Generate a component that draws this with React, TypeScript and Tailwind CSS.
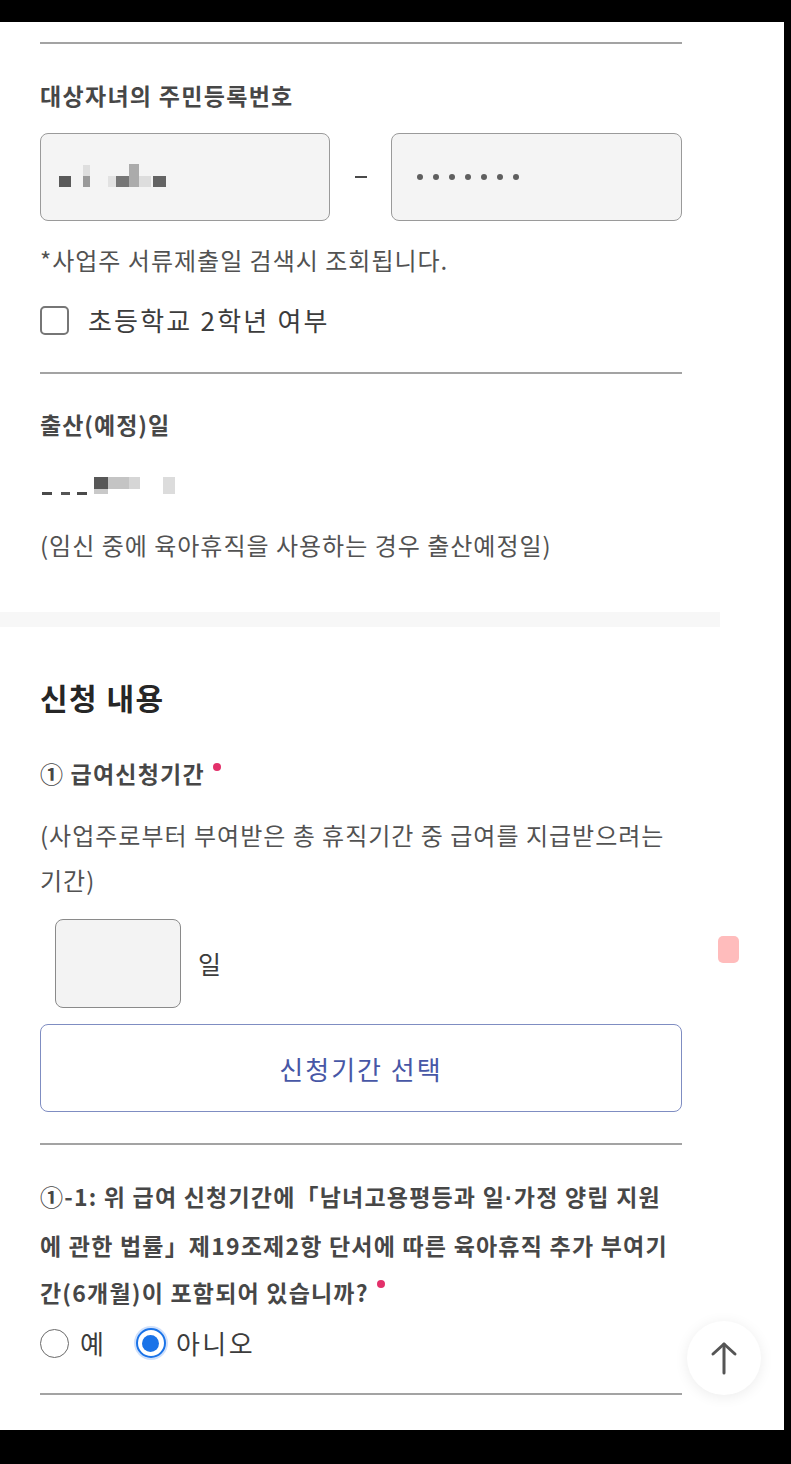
import React from 'react';

const KR = { fontFamily: '"Noto Sans CJK KR", "Noto Sans", sans-serif' };

// 흐릿하게 가려진 값 (모자이크 블록)
const Blur = ({ blocks }: { blocks: [number, number, number, number, string][] }) => (
  <div className="relative h-[30px] w-[140px]">
    {blocks.map(([x, y, w, h, c], i) => (
      <span
        key={i}
        className="absolute block"
        style={{ left: x, top: y, width: w, height: h, background: c }}
      />
    ))}
  </div>
);

const Divider = ({ className = '' }: { className?: string }) => (
  <div className={`h-[2px] w-[642px] bg-[#a3a3a3] ${className}`} />
);

const Required = ({ className = '' }: { className?: string }) => (
  <span className={`inline-block w-[8px] h-[8px] rounded-full bg-[#e3306a] ${className}`} />
);

const Dot = () => <span className="font-['Liberation_Sans',sans-serif]">·</span>;

export default function App() {
  return (
    <div className="w-[791px] h-[1464px] bg-black pt-[22px]" style={KR}>
      <div className="relative w-[784px] h-[1408px] bg-white overflow-hidden">
        {/* 자녀 정보 */}
        <div className="pl-[40px] pt-[20px]">
          <Divider />

          <div className="mt-[36px] h-[30px] leading-[30px] text-[23px] font-bold text-[#474747] tracking-[1.3px]">
            대상자녀의 주민등록번호
          </div>

          <div className="mt-[23px] flex items-center w-[642px]">
            <div className="w-[290px] h-[88px] rounded-[8px] border border-[#9a9a9a] bg-[#f4f4f4] flex items-center pl-[18px]">
              <Blur
                blocks={[
                  [0, 14, 12, 11, '#5a5a5a'],
                  [24, 3, 7, 11, '#dedede'],
                  [24, 14, 7, 11, '#9a9a9a'],
                  [49, 14, 8, 11, '#e2e2e2'],
                  [57, 14, 13, 11, '#767676'],
                  [70, 2, 10, 23, '#ababab'],
                  [80, 14, 12, 11, '#dddddd'],
                  [94, 14, 13, 11, '#646464'],
                ]}
              />
            </div>
            <div className="w-[61px] flex justify-center">
              <span className="block w-[12px] h-[2px] bg-[#4a4a4a]" />
            </div>
            <div className="w-[291px] h-[88px] rounded-[8px] border border-[#9a9a9a] bg-[#f4f4f4] flex items-center pl-[25px] gap-[10px]">
              {[0, 1, 2, 3, 4, 5, 6].map((i) => (
                <span key={i} className="block w-[6px] h-[6px] rounded-full bg-[#5f5f5f]" />
              ))}
            </div>
          </div>

          <div className="mt-[24px] h-[30px] leading-[30px] text-[24px] text-[#525252] tracking-[1px]">
            *사업주 서류제출일 검색시 조회됩니다.
          </div>

          <label className="mt-[30px] h-[30px] flex items-center gap-[19px]">
            <span className="block w-[29px] h-[29px] rounded-[5px] border-2 border-[#767676] bg-white" />
            <span className="text-[26px] leading-[30px] text-[#3c3c3c] tracking-[2.2px]">초등학교 2학년 여부</span>
          </label>

          <Divider className="mt-[37px]" />

          <div className="mt-[35px] h-[30px] leading-[30px] text-[23px] font-bold text-[#474747] tracking-[1px]">
            출산(예정)일
          </div>

          <div className="mt-[33px] h-[30px]">
            <Blur
              blocks={[
                [2, 20, 10, 3, '#4a4a4a'],
                [21, 20, 9, 3, '#555'],
                [37, 20, 10, 3, '#4a4a4a'],
                [54, 5, 14, 12, '#575757'],
                [54, 17, 14, 5, '#c9c9c9'],
                [68, 5, 21, 12, '#c4c4c4'],
                [89, 5, 11, 12, '#d6d6d6'],
                [123, 5, 12, 17, '#dcdcdc'],
              ]}
            />
          </div>

          <div className="mt-[28px] h-[30px] leading-[30px] text-[24px] text-[#525252] tracking-[1px] whitespace-nowrap">
            (임신 중에 육아휴직을 사용하는 경우 출산예정일)
          </div>
        </div>

        <div className="mt-[52px] h-[15px] w-[720px] bg-[#f7f7f7]" />

        {/* 신청 내용 */}
        <div className="pl-[40px]">
          <h2 className="mt-[50px] h-[40px] leading-[40px] text-[30px] font-bold text-[#262626] tracking-[1.5px]">신청 내용</h2>

          <div className="mt-[41px] h-[30px] leading-[30px] text-[23px] font-bold text-[#474747] tracking-[1.2px] flex items-start">
            <span>① 급여신청기간</span>
            <Required className="ml-[8px] mt-[5px]" />
          </div>

          <p className="mt-[24px] w-[700px] whitespace-nowrap text-[24px] leading-[45px] text-[#525252] tracking-[1px]">
            (사업주로부터 부여받은 총 휴직기간 중 급여를 지급받으려는
            <br />
            기간)
          </p>

          <div className="mt-[17px] ml-[15px] flex items-center gap-[17px]">
            <div className="w-[126px] h-[89px] rounded-[8px] border border-[#8a8a8a] bg-[#f3f3f3]" />
            <span className="text-[25px] text-[#3c3c3c]">일</span>
          </div>

          <button className="mt-[16px] w-[642px] h-[88px] rounded-[8px] border-[1.5px] border-[#7f8dc2] bg-white text-[26px] text-[#4757a6] tracking-[2px]">
            신청기간 선택
          </button>

          <Divider className="mt-[31px]" />

          <p className="mt-[28px] w-[720px] whitespace-nowrap text-[23px] leading-[47px] font-bold text-[#474747] tracking-[1.2px]">
            ①-1: 위 급여 신청기간에「남녀고용평등과 일<Dot />가정 양립 지원
            <br />
            에 관한 법률」제19조제2항 단서에 따른 육아휴직 추가 부여기
            <br />
            간(6개월)이 포함되어 있습니까?
            <Required className="ml-[8px] -translate-y-[14px]" />
          </p>

          <div className="mt-[12px] h-[30px] flex items-center text-[26px] text-[#3c3c3c]">
            <span className="block w-[29px] h-[29px] rounded-full border-[1.5px] border-[#6a6a6a] bg-white" />
            <span className="ml-[11px] leading-[30px]">예</span>
            <span className="ml-[32px] flex items-center justify-center w-[30px] h-[30px] rounded-full border-2 border-[#1a73e8] bg-white shadow-[0_0_0_2px_#cfe0fb]">
              <span className="block w-[17px] h-[17px] rounded-full bg-[#1a73e8]" />
            </span>
            <span className="ml-[10px] leading-[30px] tracking-[2.5px]">아니오</span>
          </div>

          <Divider className="mt-[35px]" />
        </div>

        {/* 스크롤 표시 */}
        <div className="absolute left-[718px] top-[914px] w-[21px] h-[27px] rounded-[5px] bg-[#ffbcbc]" />

        {/* 맨 위로 버튼 */}
        <button className="absolute left-[687px] top-[1299px] w-[74px] h-[74px] rounded-full bg-white shadow-[0_2px_14px_rgba(0,0,0,0.08)] flex items-center justify-center">
          <svg width="30" height="34" viewBox="0 0 30 34" fill="none" stroke="#555" strokeWidth="3" strokeLinecap="round" strokeLinejoin="round">
            <path d="M15 32V3" />
            <path d="M4 13L15 3L26 13" />
          </svg>
        </button>
      </div>
    </div>
  );
}
